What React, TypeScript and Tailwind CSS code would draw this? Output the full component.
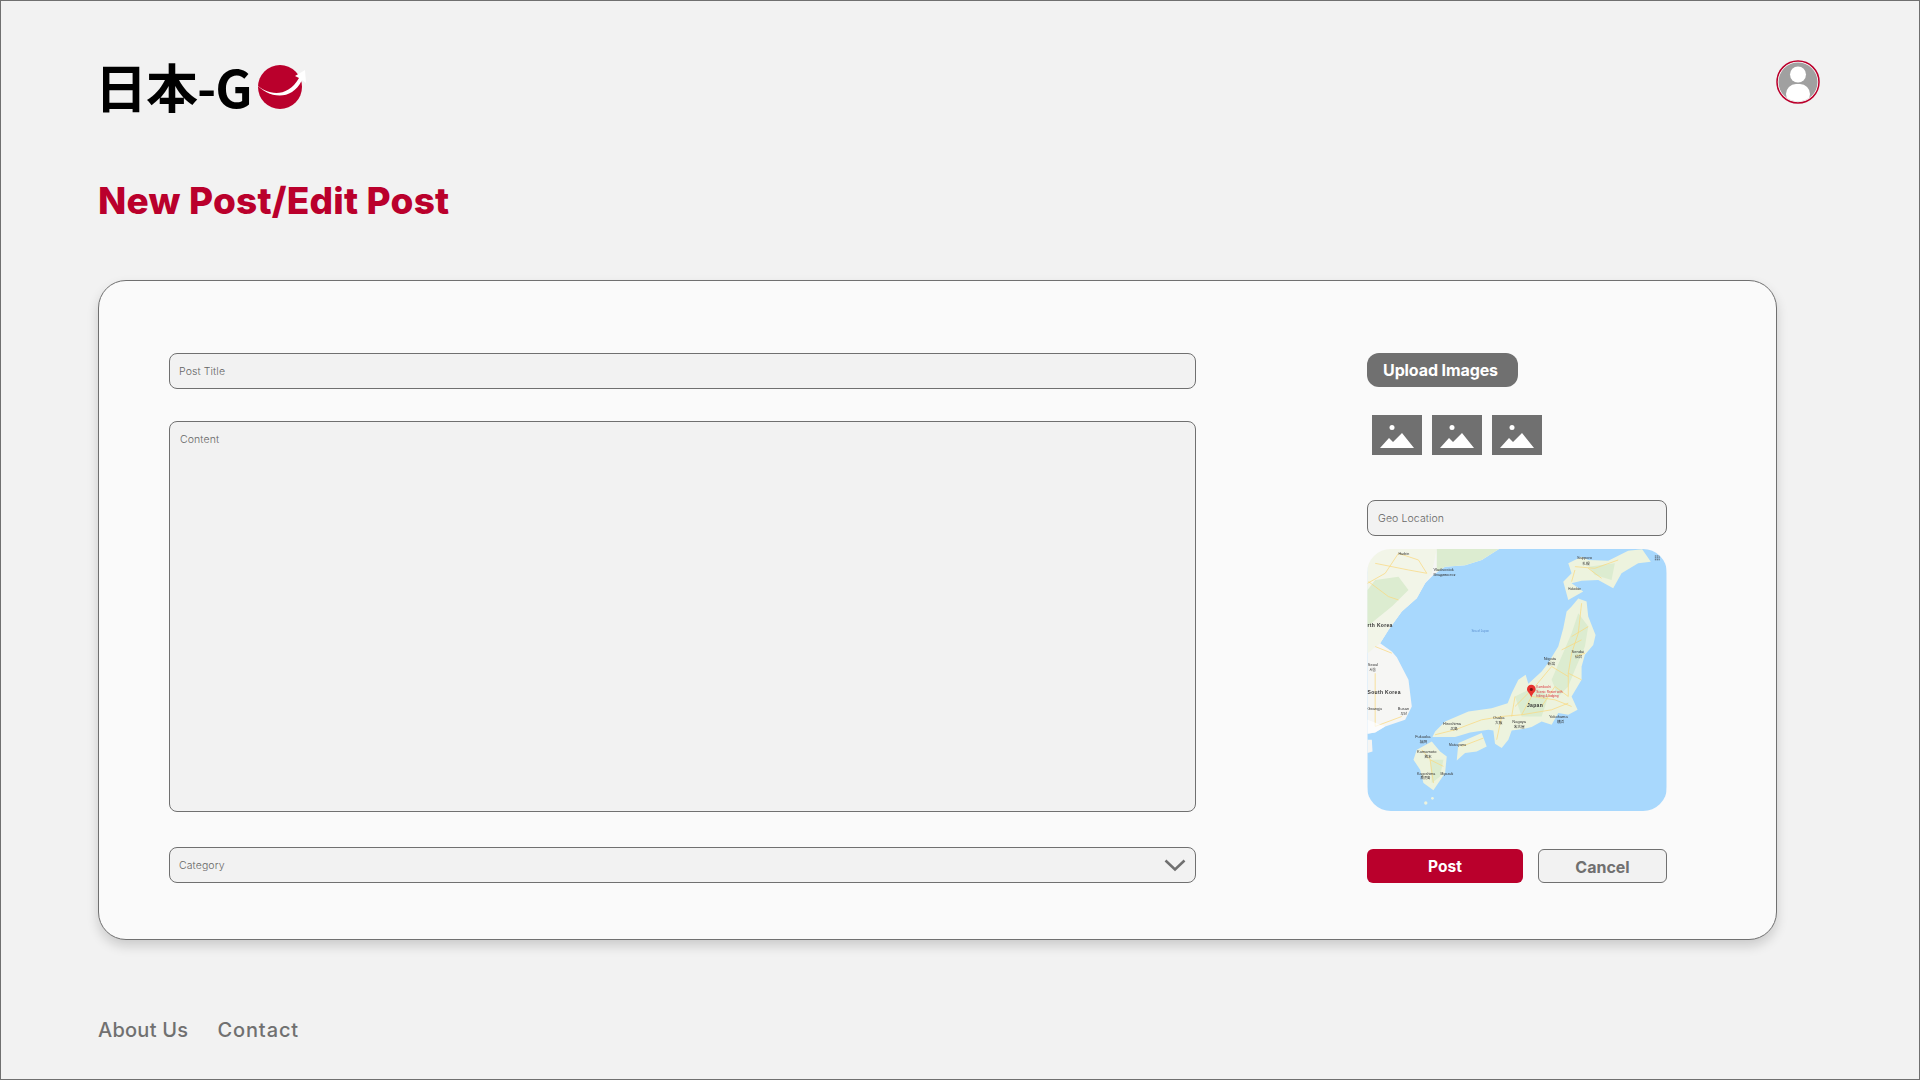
import React from "react";

const RED = "#ba002c";

function Logo() {
  return (
    <div className="flex items-center h-[56px] w-[220px] -ml-[3px] -mt-[2px]">
      <span className="whitespace-nowrap text-[52px] leading-[56px] font-bold text-black tracking-[-1px] font-['Noto_Sans_CJK_JP',sans-serif]">日本-G</span>
      <svg width="52" height="52" viewBox="0 0 52 52" className="ml-[3px] mt-[2px] shrink-0">
        <circle cx="25" cy="26" r="22" fill={RED} />
        <path d="M1 23 C12 34 32 38 44 17 L40 15 L50 9 L51 22 L47 19 C36 42 12 36 1 23 Z" fill="#ffffff" />
      </svg>
    </div>
  );
}

function Avatar() {
  return (
    <svg width="44" height="44" viewBox="0 0 44 44">
      <defs>
        <clipPath id="av"><circle cx="22" cy="22" r="19.5" /></clipPath>
      </defs>
      <circle cx="22" cy="22" r="21" fill="#ffffff" stroke={RED} strokeWidth="1.5" />
      <circle cx="22" cy="22" r="19.5" fill="#a0a0a0" />
      <g clipPath="url(#av)">
        <circle cx="22" cy="14.5" r="8" fill="#ffffff" />
        <rect x="10" y="24" width="24" height="20" rx="10" fill="#ffffff" />
      </g>
    </svg>
  );
}

function ImageIcon() {
  return (
    <svg width="50" height="40" viewBox="0 0 50 40" className="block">
      <rect width="50" height="40" fill="#707070" />
      <circle cx="20" cy="12.5" r="2.5" fill="#ffffff" />
      <path d="M8 33 L17 23 L21 27 L30 18 L42 33 Z" fill="#ffffff" />
    </svg>
  );
}

function Field({ label, className = "" }: { label: string; className?: string }) {
  return (
    <div className={`border border-[#707070] bg-[#f2f2f2] rounded-[8px] flex items-center pl-[9px] pt-[2px] text-[10.5px] tracking-[0.1px] font-light text-[#666666] ${className}`}>
      {label}
    </div>
  );
}

function JapanMap() {
  const land = "#edf3de";
  const green = "#dcecd0";
  const road = "#f9d97f";
  const lab = "#333333";
  const labels: [string, number, number, number][] = [
    ["Vladivostok", 235, 92, 12],
    ["Владивосток", 235, 107, 11],
    ["Sapporo", 666, 58, 12],
    ["札幌", 682, 74, 11],
    ["rth Korea", 37, 261, 15],
    ["Niigata", 566, 359, 12],
    ["新潟", 578, 374, 11],
    ["Sendai", 650, 340, 12],
    ["仙台", 660, 355, 11],
    ["Seoul", 38, 379, 12],
    ["서울", 42, 394, 11],
    ["South Korea", 37, 462, 15],
    ["Japan", 516, 503, 15],
    ["Busan", 128, 512, 12],
    ["부산", 136, 526, 11],
    ["Gwangju", 37, 512, 11],
    ["Hiroshima", 264, 555, 12],
    ["広島", 286, 570, 11],
    ["Osaka", 414, 538, 12],
    ["大阪", 420, 553, 11],
    ["Nagoya", 472, 549, 12],
    ["名古屋", 476, 564, 11],
    ["Yokohama", 582, 536, 12],
    ["横浜", 606, 550, 11],
    ["Fukuoka", 180, 596, 12],
    ["福岡", 194, 611, 11],
    ["Kumamoto", 186, 639, 12],
    ["熊本", 208, 654, 11],
    ["Kagoshima", 186, 705, 11],
    ["鹿児島", 196, 718, 10],
    ["Matsuyama", 282, 618, 10],
    ["Miyazaki", 256, 705, 10],
    ["Harbin", 130, 45, 11],
    ["Hakodate", 640, 150, 9],
  ];
  return (
    <svg viewBox="37 27 898 787" className="block w-full h-full blur-[0.4px]">
      <rect x="37" y="27" width="898" height="787" fill="#a8d8fd" />
      <path d="M37 27 L432 27 L380 60 L330 76 L270 80 L235 105 L210 130 L185 175 L140 215 L100 270 L75 310 L110 335 L125 352 L160 420 L170 500 L150 540 L90 560 L60 578 L37 582 Z" fill="#f6f6f4" />
      <path d="M37 27 L245 27 L230 100 L210 130 L185 175 L140 215 L100 270 L75 310 L37 340 Z" fill="#f2f5e8" />
      <path d="M60 120 L130 110 L160 150 L110 200 L60 240 L37 260 L37 150 Z" fill={green} />
      <path d="M245 27 L432 27 L380 60 L330 76 L270 80 L245 95 Z" fill={green} />
      <path d="M37 600 L50 600 L52 635 L37 640 Z" fill="#f5f5f3" />
      <path d="M640 70 L680 50 L700 60 L760 62 L820 32 L862 28 L888 65 L850 70 L800 100 L775 145 L730 120 L680 122 L650 130 L685 155 L640 180 L625 125 L650 100 Z" fill={land} />
      <path d="M670 176 L695 185 L700 230 L722 285 L715 315 L690 345 L680 380 L680 420 L650 470 L668 510 L640 525 L610 520 L590 555 L560 545 L530 562 L505 568 L470 572 L460 600 L440 625 L420 612 L415 572 L400 570 L345 578 L300 592 L232 592 L240 575 L270 545 L340 515 L410 505 L458 490 L470 460 L490 420 L512 405 L520 432 L560 395 L578 372 L610 320 L625 265 L635 215 L650 200 Z" fill={land} />
      <path d="M670 220 L700 260 L690 320 L660 390 L640 440 L610 470 L590 420 L620 350 L650 280 Z" fill={green} />
      <path d="M480 470 L540 440 L580 470 L560 530 L500 530 Z" fill={green} />
      <path d="M310 610 L380 580 L395 620 L365 635 L330 640 L305 662 Z" fill={land} />
      <path d="M185 630 L230 605 L255 635 L275 650 L270 700 L235 752 L205 730 L195 690 L175 660 Z" fill={land} />
      <path d="M225 660 L265 660 L255 710 L230 730 Z" fill={green} />
      <path d="M700 80 L780 70 L770 120 L720 105 Z" fill={green} />
      <circle cx="212" cy="790" r="5" fill={land} />
      <circle cx="232" cy="776" r="4" fill={land} />
      <g fill="none" stroke={road} strokeWidth="2.2">
        <path d="M37 130 L90 100 L130 40 M60 70 L160 90 L215 100 M40 125 L100 170 L130 180 M130 40 L190 60 L215 100" />
        <path d="M680 190 L670 280 L650 340 L640 400 L640 470 M590 380 L640 410 M700 260 L650 290 M690 340 L660 350 M680 420 L640 400 M620 330 L680 300" />
        <path d="M240 585 L300 570 L380 540 L440 530 L500 525 L590 510 L640 490 M480 500 L540 440 L590 380 M440 530 L425 600 M500 525 L530 470 L600 480 L650 500 M560 500 L600 440 L640 470 M470 530 L480 470" />
        <path d="M660 80 L720 85 L790 60 M700 85 L740 115 M660 90 L650 125" />
        <path d="M200 630 L225 660 L235 730 M320 620 L385 595 M225 660 L265 680" />
        <path d="M60 320 L110 340 M60 400 L60 560 L140 530" />
      </g>
      <path d="M37 540 L90 560 L60 578 L37 582 Z" fill="#ffffff" opacity="0.7" />
      <g fontFamily="'Liberation Sans','Noto Sans CJK JP',sans-serif" fill={lab}>
        {labels.map(([t, x, y, s]) => (
          <text key={t + x} x={x} y={y} fontSize={s} fontWeight={s >= 15 ? 700 : 400} letterSpacing={s >= 15 ? 1 : 0}>{t}</text>
        ))}
        <text x="349" y="277" fontSize="9" fill="#5b8fd0">Sea of Japan</text>
        <text x="544" y="446" fontSize="9.5" fill="#d9303a">Kamikochi</text>
        <text x="544" y="459" fontSize="9.5" fill="#d9303a">Scenic Resort with</text>
        <text x="544" y="472" fontSize="9.5" fill="#d9303a">hiking &amp; lodging</text>
      </g>
      <path d="M529 472 C524 458 516 456 516 448 A13 13 0 0 1 542 448 C542 456 534 458 529 472 Z" fill="#e8322e" />
      <circle cx="529" cy="449" r="4.5" fill="#7a1210" />
      <g fill="#6b7f90">
        {[0, 1, 2].flatMap((r) => [0, 1, 2].map((c) => (
          <rect key={`${r}${c}`} x={900 + c * 5.5} y={46 + r * 5.5} width="4" height="4" />
        )))}
      </g>
    </svg>
  );
}

export default function App() {
  return (
    <div className="w-[1920px] h-[1080px] border border-[#707070] bg-[#f2f2f2] pt-[59px] pl-[97px] pr-[99px] overflow-hidden font-['Inter',sans-serif]">
      <header className="flex justify-between items-start">
        <Logo />
        <Avatar />
      </header>

      <h1 className="mt-[63px] h-[48px] text-[37px] leading-[48px] font-extrabold tracking-[0.2px] whitespace-nowrap text-[#ba002c] font-['Inter',sans-serif]">New Post/Edit Post</h1>

      <main className="mt-[55px] w-[1679px] h-[660px] border border-[#707070] rounded-[28px] bg-[#fafafa] shadow-[0_6px_12px_rgba(0,0,0,0.16)] pt-[72px] pl-[70px] flex">
        <div className="w-[1027px] flex flex-col">
          <Field label="Post Title" className="h-[36px]" />
          <div className="mt-[32px] h-[391px] border border-[#707070] bg-[#f2f2f2] rounded-[8px] pl-[10px] pt-[10px] text-[10.5px] tracking-[0.1px] font-light text-[#666666]">Content</div>
          <div className="mt-[35px] relative">
            <Field label="Category" className="h-[36px]" />
            <svg width="22" height="13" viewBox="0 0 22 13" className="absolute right-[10px] top-[12px]">
              <path d="M1.5 1.5 L11 10.5 L20.5 1.5" fill="none" stroke="#707070" strokeWidth="2.5" />
            </svg>
          </div>
        </div>

        <div className="ml-[171px] w-[300px] flex flex-col">
          <button className="w-[151px] h-[34px] pr-[4px] rounded-[12px] bg-[#707070] text-white text-[16px] font-bold tracking-[-0.1px]">Upload Images</button>
          <div className="mt-[28px] ml-[5px] flex gap-[10px]">
            <ImageIcon />
            <ImageIcon />
            <ImageIcon />
          </div>
          <Field label="Geo Location" className="mt-[45px] h-[36px] w-[300px] pl-[10px]" />
          <div className="mt-[13px] h-[262px] w-[300px] rounded-[24px] overflow-hidden">
            <JapanMap />
          </div>
          <div className="mt-[38px] flex gap-[15px]">
            <button className="w-[156px] h-[34px] pt-[1px] rounded-[6px] bg-[#ba002c] text-white text-[15.5px] font-bold">Post</button>
            <button className="w-[129px] h-[34px] pt-[1px] rounded-[6px] border border-[#707070] bg-[#f2f2f2] text-[#707070] text-[16px] font-bold">Cancel</button>
          </div>
        </div>
      </main>

      <footer className="mt-[76px] flex gap-[29px] text-[20px] tracking-[0.25px] leading-[28px] font-medium text-[#707070]">
        <span>About Us</span>
        <span className="tracking-[0.9px]">Contact</span>
      </footer>
    </div>
  );
}
